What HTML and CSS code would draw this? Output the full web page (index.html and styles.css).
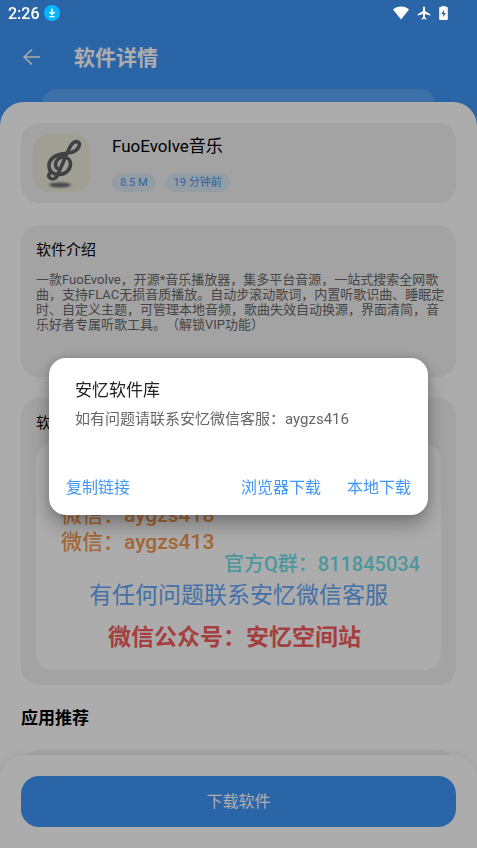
FILE: index.html
```html
<!DOCTYPE html>
<html lang="zh-CN">
<head>
<meta charset="utf-8">
<meta name="viewport" content="width=device-width, initial-scale=1">
<title>软件详情</title>
<link rel="stylesheet" href="styles.css">
</head>
<body>
<div class="status-bar">
  <span class="clock">2:26</span>
  <svg class="status-download" viewBox="0 0 16 16" aria-hidden="true"><circle cx="8" cy="8" r="8" fill="#00b7ff"/><path d="M8 3.400v6M5.400 7 8 9.600 10.600 7M5.400 11.600h5.200" fill="none" stroke="#fff" stroke-width="1.400"/></svg>
  <span class="status-icons">
    <svg width="16" height="14" viewBox="0 0 16 14" aria-hidden="true"><path d="M8 13.500 0 3.500C2 1.500 4.800.500 8 .500s6 1 8 3z" fill="#fff"/></svg>
    <svg width="14" height="14" viewBox="0 0 14 14" aria-hidden="true"><path d="M13.300 9.500V8.200L8 5V1.500a1 1 0 0 0-2 0V5L.7 8.200v1.300L6 7.900v3.600l-1.400 1v1L7 12.900l2.400.6v-1l-1.400-1V7.900z" fill="#fff"/></svg>
    <svg width="9" height="14" viewBox="0 0 9 14" aria-hidden="true"><path d="M2.500 0h4v1H8q.8 0 .8.800V13q0 1-.8 1H1Q.2 14 .2 13V1.800Q.2 1 1 1h1.500z" fill="#fff"/><path d="M5 3.800 2.300 8h1.900v3.200L6.900 7H5z" fill="#2b67a7"/></svg>
  </span>
</div>

<div class="page">
  <header class="toolbar">
    <button class="back" type="button" aria-label="返回">
      <svg width="18" height="16" viewBox="0 0 18 16" aria-hidden="true"><path d="M9 .500 1 8l8 7.500M1 8h16" fill="none" stroke="#fff" stroke-width="1.500"/></svg>
    </button>
    <h1>软件详情</h1>
  </header>
  <div class="peek"></div>

  <main class="sheet">
    <section class="card app">
      <svg class="app-icon" viewBox="0 0 57 58" aria-hidden="true">
        <defs><filter id="soft" x="-20%" y="-50%" width="140%" height="200%"><feGaussianBlur stdDeviation="1"/></filter></defs>
        <rect width="57" height="58" rx="16" fill="#eaecd9"/>
        <ellipse cx="27" cy="51" rx="11" ry="2.500" fill="#66686b" filter="url(#soft)"/>
        <path d="M16.500 39.500c-2 2.500 0 5.500 3 5.500 3 0 4.500-2 5.500-5L36 15C38 9.500 42 6.500 45 8c3 1.600 1 6.500-3 9C37 20 30 18.500 23.500 21.500 18 24 15.500 28 16 33c.5 5 5 8 10.500 7.500C33 40 37.500 35.500 37.500 30c0-4-3-7-7-7-4.500 0-8 3.500-8 7.500 0 2.500 1.500 4.500 3.500 4.500" fill="none" stroke="#5e6066" stroke-width="3.600" stroke-linecap="round" stroke-linejoin="round"/>
      </svg>
      <div class="app-info">
        <h2>FuoEvolve音乐</h2>
        <div class="tags"><span>8.5 M</span><span>19 分钟前</span></div>
      </div>
    </section>

    <section class="card intro">
      <h3>软件介绍</h3>
      <p>一款FuoEvolve，开源*音乐播放器，集多平台音源，一站式搜索全网歌曲，支持FLAC无损音质播放。自动步滚动歌词，内置听歌识曲、睡眠定时、自定义主题，可管理本地音频，歌曲失效自动换源，界面清简，音乐好者专属听歌工具。（解锁VIP功能）</p>
    </section>

    <section class="card gallery">
      <h3>软件</h3>
      <div class="poster">
        <p class="wechat">微信：aygzs418</p>
        <p class="wechat">微信：aygzs413</p>
        <p class="group">官方Q群：811845034</p>
        <p class="contact">有任何问题联系安忆微信客服</p>
        <p class="official">微信公众号：安忆空间站</p>
      </div>
    </section>

    <h2 class="recommend-title">应用推荐</h2>
    <section class="card recommend"></section>
  </main>

  <footer class="bottom-bar">
    <button class="download" type="button">下载软件</button>
  </footer>
</div>

<div class="scrim">
  <div class="dialog" role="dialog" aria-modal="true" aria-labelledby="dialog-title">
    <h2 id="dialog-title">安忆软件库</h2>
    <p>如有问题请联系安忆微信客服：aygzs416</p>
    <div class="actions">
      <button class="copy" type="button">复制链接</button>
      <button type="button">浏览器下载</button>
      <button type="button">本地下载</button>
    </div>
  </div>
</div>
</body>
</html>
```

FILE: styles.css
```css
:root {
  --blue: #3f97f6;
  --card: #f0f0f0;
  --surface: #fefefe;
}

* {
  box-sizing: border-box;
}

body {
  margin: 0;
  overflow: hidden;
  font-family: Roboto, "Noto Sans CJK SC", sans-serif;
  text-spacing-trim: space-all;
  background: var(--blue);
}

h1, h2, h3, p {
  margin: 0;
}

h2, h3 {
  font-weight: 400;
}

button {
  padding: 0;
  border: 0;
  background: none;
  font-family: inherit;
  font-size: 16px;
}

svg {
  display: block;
}

.status-bar {
  position: fixed;
  inset: 0 0 auto;
  z-index: 3;
  display: flex;
  align-items: center;
  height: 26px;
  padding: 0 29px 0 8px;
  color: #fff;
}

.clock {
  font-size: 16px;
  font-weight: 500;
}

.status-download {
  width: 16px;
  height: 16px;
  margin-left: 4px;
}

.status-icons {
  display: flex;
  align-items: center;
  gap: 8px;
  margin-left: auto;
}

.page {
  height: 100vh;
  overflow: hidden;
  padding-top: 25px;
}

.toolbar {
  display: flex;
  align-items: center;
  gap: 33px;
  height: 64px;
  padding: 0 23px;
}

.toolbar h1 {
  padding-top: 2px;
  color: #fff;
  font-size: 21px;
  font-weight: 700;
  line-height: 24px;
}

.peek {
  height: 13px;
  margin: 0 43px;
  border-radius: 18px 18px 0 0;
  background: rgba(255, 255, 255, 0.15);
}

.sheet {
  min-height: 100vh;
  padding: 21px;
  border-radius: 24px 24px 0 0;
  background: var(--surface);
}

.card {
  border-radius: 18px;
  background: var(--card);
}

.card h3 {
  font-size: 15px;
  line-height: 20px;
}

.app {
  display: flex;
  gap: 22px;
  padding: 11px 12px;
}

.app-icon {
  width: 57px;
  height: 58px;
}

.app-info {
  display: flex;
  flex-direction: column;
  justify-content: space-between;
}

.app-info h2 {
  font-size: 17px;
  line-height: 24px;
}

.tags {
  display: flex;
  gap: 10px;
}

.tags span {
  padding: 1px 8px 0;
  border-radius: 10px;
  background: #dce7f2;
  color: var(--blue);
  font-size: 11px;
  line-height: 18px;
}

.intro {
  height: 152px;
  margin-top: 22px;
  padding: 15px 8px 0 15px;
}

.intro p {
  margin-top: 12px;
  color: #666;
  font-size: 13px;
  line-height: 15px;
}

.gallery {
  margin-top: 21px;
  padding: 15px;
}

.poster {
  margin-top: 11px;
  padding: 58px 21px 19px;
  border-radius: 16px;
  background: var(--surface);
  line-height: 27px;
}

.poster .wechat {
  padding-left: 4px;
  color: #f19750;
  font-size: 21px;
  font-weight: 500;
}

.poster .group {
  color: #74dee7;
  font-size: 20px;
  font-weight: 500;
  line-height: 16px;
  text-align: right;
}

.poster .contact {
  margin-top: 10px;
  color: #64a5f7;
  font-size: 23px;
  text-align: center;
}

.poster .official {
  margin-top: 15px;
  padding-right: 8px;
  color: #f35d5e;
  font-size: 23px;
  font-weight: 700;
  text-align: center;
}

.sheet .recommend-title {
  margin: 21px 0 20px;
  font-size: 17px;
  font-weight: 700;
  line-height: 24px;
}

.recommend {
  height: 80px;
}

.bottom-bar {
  position: fixed;
  inset: auto 0 0;
  z-index: 1;
  padding: 21px;
  border-radius: 24px 24px 0 0;
  background: var(--surface);
  box-shadow: 0 0 8px rgba(0, 0, 0, 0.08);
}

.download {
  display: block;
  width: 100%;
  height: 51px;
  padding-bottom: 3px;
  border-radius: 18px;
  background: var(--blue);
  color: #fff;
}

.scrim {
  position: fixed;
  inset: 0;
  z-index: 2;
  display: flex;
  align-items: center;
  padding: 25px 49px 0;
  background: rgba(0, 0, 0, 0.32);
}

.dialog {
  flex: 1;
  padding: 19px 17px 15px;
  border-radius: 17px;
  background: #fff;
  box-shadow: 0 10px 20px rgba(0, 0, 0, 0.3), 0 0 8px rgba(0, 0, 0, 0.15);
}

.dialog h2 {
  padding: 0 9px;
  color: #222;
  font-size: 17px;
  line-height: 26px;
}

.dialog p {
  margin-top: 5px;
  padding: 0 9px;
  color: #666;
  font-size: 15px;
  line-height: 22px;
}

.actions {
  display: flex;
  gap: 26px;
  margin-top: 46px;
}

.actions button {
  color: var(--blue);
  line-height: 24px;
}

.actions .copy {
  margin-right: auto;
}
```
